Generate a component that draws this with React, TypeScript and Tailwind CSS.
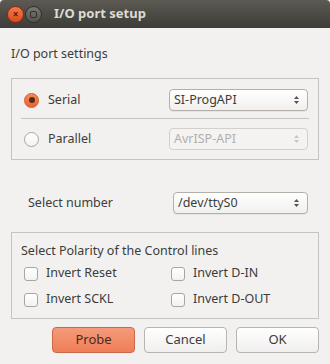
import React from 'react';

const font = { fontFamily: '"Noto Sans", "Open Sans", sans-serif' };

function Spin({ disabled }: { disabled?: boolean }) {
  const c = disabled ? '#c8c6c2' : '#55534f';
  return (
    <svg width="7" height="12" viewBox="0 0 7 12" className="shrink-0">
      <path d="M3.5 2 L6 5 L1 5 Z" fill={c} />
      <path d="M3.5 10 L6 7 L1 7 Z" fill={c} />
    </svg>
  );
}

function Combo({ label, disabled, className }: { label: string; disabled?: boolean; className: string }) {
  return (
    <div
      className={`flex items-center justify-between rounded-[4px] border pl-[4px] pr-[7px] text-[12.5px] ${
        disabled
          ? 'border-[#d3d0cb] bg-[#f4f3f2] text-[#b2afaa]'
          : 'border-[#b3afa9] bg-gradient-to-b from-white to-[#f1f0ef] text-[#3c3c3c] shadow-[0_1px_0_rgba(0,0,0,0.05)]'
      } ${className}`}
    >
      <span>{label}</span>
      <Spin disabled={disabled} />
    </div>
  );
}

function Radio({ checked }: { checked?: boolean }) {
  return checked ? (
    <div className="flex h-[15px] w-[15px] items-center justify-center rounded-full border border-[#d9562c] bg-gradient-to-b from-[#f48a5a] to-[#e8642f]">
      <div className="h-[6px] w-[6px] rounded-full bg-[#5a2a16]" />
    </div>
  ) : (
    <div className="h-[15px] w-[15px] rounded-full border border-[#a9a6a1] bg-gradient-to-b from-white to-[#f3f2f1]" />
  );
}

function Check({ label }: { label: string }) {
  return (
    <div className="flex h-[14px] items-center gap-[8px]">
      <div className="h-[14px] w-[14px] rounded-[3px] border border-[#a9a6a1] bg-gradient-to-b from-white to-[#f3f2f1]" />
      <span className="text-[12.5px] text-[#3c3c3c]">{label}</span>
    </div>
  );
}

function Btn({ label, primary }: { label: string; primary?: boolean }) {
  return (
    <div
      className={`flex h-[26px] w-[83px] items-center justify-center rounded-[4px] border text-[13px] ${
        primary
          ? 'border-[#c9694a] bg-gradient-to-b from-[#f49a7a] to-[#ef7e57] text-[#4a2a1f]'
          : 'border-[#b8b4ae] bg-gradient-to-b from-white to-[#f0efee] text-[#3c3c3c]'
      }`}
    >
      {label}
    </div>
  );
}

export default function App() {
  return (
    <div className="h-[364px] w-[330px] overflow-hidden bg-[#f2f1f0]" style={font}>
      <div className="flex h-[28px] items-center rounded-t-[4px] bg-gradient-to-b from-[#5c5a52] to-[#3d3c38] pl-[7px]">
        <div className="flex h-[17px] w-[17px] items-center justify-center rounded-full border border-[#8a2a0e] bg-gradient-to-b from-[#f47a4a] to-[#dc4a1c]">
          <span className="text-[10px] font-bold leading-none text-[#5a1c08]">×</span>
        </div>
        <div className="ml-[1px] flex h-[17px] w-[17px] items-center justify-center rounded-full border border-[#2e2d2a] bg-gradient-to-b from-[#7a7872] to-[#55534e]">
          <div className="h-[7px] w-[7px] rounded-[2px] border border-[#2e2d2a]" />
        </div>
        <span className="ml-[12px] text-[13px] font-bold text-[#dfdbd2]">I/O port setup</span>
      </div>

      <div className="flex flex-col px-[11px]">
        <div className="mt-[17px] h-[18px] text-[12.5px] leading-[18px] text-[#3c3c3c]">I/O port settings</div>

        <div className="mt-[15px] flex h-[82px] flex-col border border-[#c7c4bf] px-[9px]">
          <div className="mt-[10px] flex h-[22px] items-center">
            <div className="flex w-[148px] items-center gap-[9px] pl-[3px]">
              <Radio checked />
              <span className="text-[12.5px] text-[#3c3c3c]">Serial</span>
            </div>
            <Combo label="SI-ProgAPI" className="h-[22px] w-[139px]" />
          </div>
          <div className="mt-[7px] h-px bg-[#c7c4bf]" />
          <div className="mt-[9px] flex h-[22px] items-center">
            <div className="flex w-[148px] items-center gap-[9px] pl-[3px]">
              <Radio />
              <span className="text-[12.5px] text-[#3c3c3c]">Parallel</span>
            </div>
            <Combo label="AvrISP-API" disabled className="h-[22px] w-[139px]" />
          </div>
        </div>

        <div className="mt-[32px] flex h-[22px] items-center">
          <span className="w-[162px] shrink-0 pl-[17px] text-[12.5px] text-[#3c3c3c]">Select number</span>
          <Combo label="/dev/ttyS0" className="h-[22px] w-[135px]" />
        </div>

        <div className="mt-[18px] flex h-[87px] flex-col border border-[#c7c4bf] px-[9px]">
          <div className="mt-[9px] text-[12.5px] text-[#3c3c3c]">Select Polarity of the Control lines</div>
          <div className="mt-[6px] grid grid-cols-[147px_1fr] gap-y-[12px] pl-[3px]">
            <Check label="Invert Reset" />
            <Check label="Invert D-IN" />
            <Check label="Invert SCKL" />
            <Check label="Invert D-OUT" />
          </div>
        </div>

        <div className="mt-[8px] flex justify-end gap-[9px]">
          <Btn label="Probe" primary />
          <Btn label="Cancel" />
          <Btn label="OK" />
        </div>
      </div>
    </div>
  );
}
